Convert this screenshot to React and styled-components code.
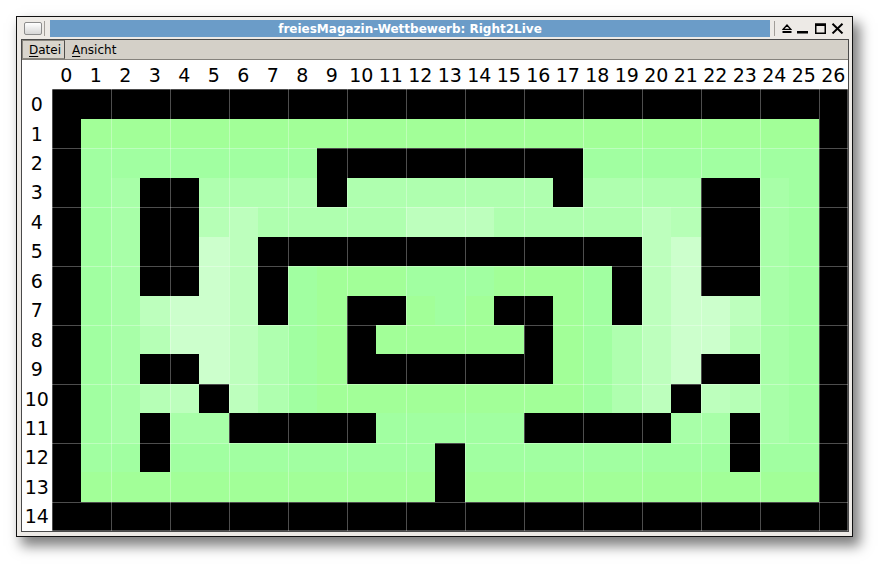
import React from 'react';
import styled, { createGlobalStyle } from 'styled-components';

const GlobalStyle = createGlobalStyle`
  html, body { margin: 0; padding: 0; background: #ffffff; }
  body { font-family: "DejaVu Sans", "Liberation Sans", sans-serif; }
`;

const PALETTE = {
  X: '#000000',
  1: '#a2ff98',
  2: '#a1ffa1',
  3: '#a8ffa8',
  4: '#afffaf',
  5: '#b6ffb6',
  6: '#bdffbd',
  7: '#ccffcc',
};

// left half (columns 0..13), the board is mirrored around column 13
const LEFT = [
  'XXXXXXXXXXXXXX',
  'X1111111111111',
  'X22222222XXXXX',
  'X23XX4444X4444',
  'X23XX564444466',
  'X23XX76XXXXXXX',
  'X23XX76X211122',
  'X236776X21XX12',
  'X235776421X111',
  'X23XX76421XXXX',
  'X2356X64211111',
  'X23X33XXXXX222',
  'X22X222222222X',
  'X111111111111X',
  'XXXXXXXXXXXXXX',
];

const COLS = 27;
const ROWS = 15;
const BOARD = LEFT.map((r) =>
  Array.from({ length: COLS }, (_, c) => r[c <= 13 ? c : 26 - c])
);

const Stage = styled.div`
  width: 888px;
  height: 572px;
  padding: 16px 0 0 16px;
  box-sizing: border-box;
  background: #ffffff;
`;

const Window = styled.div`
  width: 837px;
  height: 521px;
  box-sizing: border-box;
  border: 1px solid #111111;
  background: #edeae6;
  padding: 3px 3px 4px 4px;
  display: flex;
  flex-direction: column;
  box-shadow: 6px 8px 12px 1px rgba(0, 0, 0, 0.5);
`;

const TitleBar = styled.div`
  display: flex;
  align-items: center;
  height: 17px;
  margin-bottom: 2px;
  flex: none;
`;

const WinIcon = styled.div`
  width: 18px;
  height: 13px;
  margin-left: 3px;
  box-sizing: border-box;
  border: 1px solid #8c8c8c;
  border-radius: 2px;
  background: linear-gradient(#ffffff, #d6d6d6);
  flex: none;
`;

const Sep = styled.div`
  width: 1px;
  height: 15px;
  background: #a29e99;
  margin-left: ${(p) => p.$ml}px;
  flex: none;
`;

const Caption = styled.div`
  flex: 1;
  height: 17px;
  margin-left: 5px;
  background: #6b9cc8;
  color: #ffffff;
  font-weight: bold;
  font-size: 12px;
  display: flex;
  align-items: center;
  justify-content: center;
  white-space: nowrap;
`;

const TitleButton = styled.svg`
  flex: none;
  display: block;
  margin-left: ${(p) => p.$ml}px;
  margin-right: ${(p) => p.$mr || 0}px;
`;

const Client = styled.div`
  flex: 1;
  border: 1px solid #4a4a4a;
  display: flex;
  flex-direction: column;
  min-height: 0;
`;

const MenuBar = styled.div`
  height: 19px;
  flex: none;
  display: flex;
  background: #d4d0c8;
  border-bottom: 1px solid #85827c;
`;

const MenuItem = styled.div`
  display: flex;
  align-items: center;
  padding: 0 3px 0 6px;
  font-size: 12px;
  color: #000000;
  box-sizing: border-box;
  border: 1px solid ${(p) => (p.$active ? '#8a877f' : 'transparent')};
  border-right-color: ${(p) => (p.$active ? '#4f4d49' : 'transparent')};
  background: ${(p) => (p.$active ? '#d9d5cd' : 'transparent')};
  u {
    text-decoration: underline;
    text-underline-offset: 2px;
  }
`;

const Content = styled.div`
  flex: 1;
  background: #ffffff;
  display: grid;
  grid-template-columns: repeat(28, 1fr);
  grid-template-rows: repeat(16, 1fr);
`;

const Label = styled.div`
  display: flex;
  align-items: center;
  justify-content: center;
  font-size: 19px;
  color: #000000;
  white-space: nowrap;
  letter-spacing: -0.2px;
`;

const LINE = 'rgba(255, 255, 255, 0.3)';

const Cell = styled.div`
  background: ${(p) => p.$color};
  box-shadow: ${(p) => {
    const s = [];
    if (p.$l) s.push(`inset 1px 0 0 ${LINE}`);
    if (p.$t) s.push(`inset 0 1px 0 ${LINE}`);
    if (p.$r) s.push(`inset -1px 0 0 ${LINE}`);
    if (p.$b) s.push(`inset 0 -1px 0 ${LINE}`);
    return s.length ? s.join(', ') : 'none';
  }};
`;

function Eject() {
  return (
    <TitleButton $ml={7} width="10" height="11" viewBox="0 0 10 11">
      <path d="M1.2 6.3 L5 2 L8.8 6.3 Z" fill="none" stroke="#000" strokeWidth="1.3" strokeLinejoin="miter" />
      <rect x="0.5" y="8" width="9" height="2" fill="#000" />
    </TitleButton>
  );
}

function Minimize() {
  return (
    <TitleButton $ml={5} width="11" height="11" viewBox="0 0 11 11">
      <rect x="0" y="8" width="11" height="2.5" fill="#000" />
    </TitleButton>
  );
}

function Maximize() {
  return (
    <TitleButton $ml={7} width="11" height="11" viewBox="0 0 11 11">
      <rect x="0.75" y="1.25" width="9.5" height="9" fill="none" stroke="#000" strokeWidth="1.5" />
      <rect x="0" y="0.5" width="11" height="2.5" fill="#000" />
    </TitleButton>
  );
}

function Close() {
  return (
    <TitleButton $ml={5} $mr={5} width="13" height="11" viewBox="0 0 13 11">
      <path d="M1.5 0.8 L11.5 10.4 M11.5 0.8 L1.5 10.4" stroke="#000" strokeWidth="2" />
    </TitleButton>
  );
}

export default function App() {
  const cells = [];
  cells.push(<Label key="corner" />);
  for (let c = 0; c < COLS; c++) cells.push(<Label key={`h${c}`}>{c}</Label>);
  for (let r = 0; r < ROWS; r++) {
    cells.push(<Label key={`r${r}`}>{r}</Label>);
    for (let c = 0; c < COLS; c++) {
      const code = BOARD[r][c];
      cells.push(
        <Cell
          key={`c${r}-${c}`}
          $color={PALETTE[code]}
          $l={c % 2 === 0}
          $t={r % 2 === 0}
          $r={c === COLS - 1}
          $b={r === ROWS - 1}
        />
      );
    }
  }

  return (
    <Stage>
      <GlobalStyle />
      <Window>
        <TitleBar>
          <WinIcon />
          <Sep $ml={2} />
          <Caption>freiesMagazin-Wettbewerb: Right2Live</Caption>
          <Sep $ml={4} />
          <Eject />
          <Minimize />
          <Maximize />
          <Close />
        </TitleBar>
        <Client>
          <MenuBar>
            <MenuItem $active>
              <span><u>D</u>atei</span>
            </MenuItem>
            <MenuItem>
              <span><u>A</u>nsicht</span>
            </MenuItem>
          </MenuBar>
          <Content>{cells}</Content>
        </Client>
      </Window>
    </Stage>
  );
}
